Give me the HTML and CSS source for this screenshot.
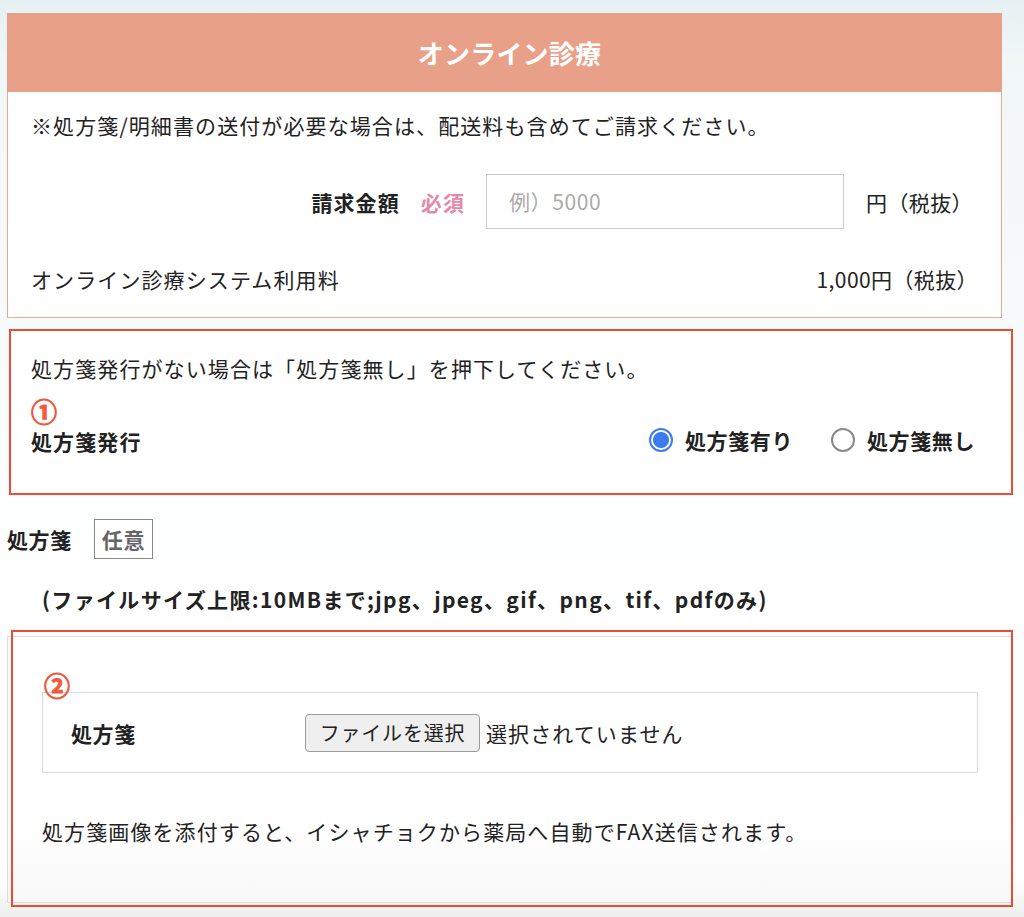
FILE: index.html
```html
<!DOCTYPE html>
<html lang="ja">
<head>
<meta charset="utf-8">
<title>オンライン診療</title>
<link rel="stylesheet" href="styles.css">
</head>
<body>
<div class="page">
  <section class="card">
    <h1 class="card-head">オンライン診療</h1>
    <div class="card-body">
      <p class="note">※処方箋/明細書の送付が必要な場合は、配送料も含めてご請求ください。</p>
      <div class="amount-row">
        <span class="label">請求金額</span>
        <span class="req">必須</span>
        <div class="amount-input">例）5000</div>
        <span class="unit">円（税抜）</span>
      </div>
      <div class="fee-row">
        <span>オンライン診療システム利用料</span>
        <span>1,000円（税抜）</span>
      </div>
    </div>
  </section>

  <section class="rx-issue">
    <p class="rx-text">処方箋発行がない場合は「処方箋無し」を押下してください。</p>
    <div class="rx-row">
      <div class="rx-left">
        <span class="num">①</span>
        <span class="label">処方箋発行</span>
      </div>
      <div class="radios">
        <label class="radio"><span class="dot checked"></span><span class="label">処方箋有り</span></label>
        <label class="radio"><span class="dot"></span><span class="label">処方箋無し</span></label>
      </div>
    </div>
  </section>

  <div class="rx-head">
    <span class="label">処方箋</span>
    <span class="opt">任意</span>
  </div>
  <p class="size-note">(ファイルサイズ上限:10MBまで;jpg、jpeg、gif、png、tif、pdfのみ)</p>

  <section class="upload">
    <span class="num">②</span>
    <div class="file-box">
      <span class="label file-label">処方箋</span>
      <button class="file-btn" type="button">ファイルを選択</button>
      <span class="file-status">選択されていません</span>
    </div>
    <p class="upload-text">処方箋画像を添付すると、イシャチョクから薬局へ自動でFAX送信されます。</p>
  </section>
</div>
</body>
</html>
```

FILE: styles.css
```css
* { box-sizing: border-box; }
html, body { margin: 0; padding: 0; }
body {
  width: 1024px;
  height: 917px;
  overflow: hidden;
  font-family: "Noto Sans CJK JP", "Noto Sans", sans-serif;
  font-size: 21px;
  letter-spacing: 1.1px;
  color: #222;
  background: linear-gradient(180deg, #e6f0f2 0px, #f1f6f7 60px, #f7fafa 300px, #ffffff 600px, #ffffff 880px, #eeeeee 917px);
}
p { margin: 0; }
.page {
  padding: 13px 0 0 7px;
}
.label { font-weight: bold; }

.card { width: 995px; }
.card-head {
  margin: 0;
  height: 79px;
  background: #e9a088;
  color: #fff;
  font-size: 26px;
  font-weight: bold;
  letter-spacing: 0.2px;
  line-height: 79px;
  text-align: center;
  padding-left: 10px;
}
.card-body {
  background: #fff;
  border: 1px solid #eea890;
  border-top: none;
  padding: 17px 23px 22px;
}
.note { line-height: 32px; }
.amount-row {
  margin-top: 33px;
  height: 55px;
  display: flex;
  align-items: center;
  justify-content: flex-end;
  padding-right: 5px;
}
.req {
  color: #e589a8;
  font-weight: bold;
  margin-left: 21px;
}
.amount-input {
  margin-left: 21px;
  width: 358px;
  height: 55px;
  border: 1px solid #ccc;
  color: #aaa;
  line-height: 53px;
  padding-left: 22px;
  letter-spacing: 0.6px;
  background: #fff;
}
.unit { margin-left: 22px; letter-spacing: 0.4px; }
.fee-row {
  margin-top: 34px;
  line-height: 32px;
  display: flex;
  justify-content: space-between;
}
.fee-row span:last-child { letter-spacing: 0.4px; }

.rx-issue {
  margin: 11px 0 0 2px;
  width: 1004px;
  height: 166px;
  border: 2px solid #ee4b35;
  background: #fff;
  padding: 21px 36px 0 20px;
}
.rx-text { line-height: 32px; }
.rx-row {
  margin-top: 14px;
  display: flex;
  justify-content: space-between;
  align-items: flex-end;
}
.rx-left { display: flex; flex-direction: column; }
.num {
  color: #f05a3c;
  font-weight: bold;
  font-size: 26px;
  line-height: 26px;
  letter-spacing: 0;
  -webkit-text-stroke: 1px #f05a3c;
}
.rx-left .label { line-height: 32px; margin-top: 1px; }
.radios { display: flex; align-items: center; gap: 38px; padding-bottom: 1px; }
.radio { display: flex; align-items: center; gap: 12px; line-height: 32px; letter-spacing: 0.6px; }
.dot {
  width: 24px;
  height: 24px;
  border-radius: 50%;
  border: 2px solid #8a8a8a;
  background: #fff;
  display: inline-block;
}
.dot.checked {
  border: 2px solid #3b7cf0;
  background: radial-gradient(circle, #3b7cf0 0, #3b7cf0 7.5px, #fff 8.5px);
}

.rx-head {
  margin-top: 24px;
  display: flex;
  align-items: center;
  height: 40px;
}
.rx-head .label { letter-spacing: 0.6px; }
.opt {
  margin-left: 22px;
  height: 40px;
  line-height: 38px;
  padding: 0 7px;
  border: 1px solid #888;
  color: #666;
  font-weight: bold;
  letter-spacing: 0.6px;
  background: #fff;
}
.size-note {
  margin: 24px 0 0 35px;
  font-weight: bold;
  line-height: 32px;
  letter-spacing: 1.35px;
}

.upload {
  position: relative;
  margin-top: 21px;
  width: 1006px;
  height: 267px;
  border: 1px solid #dddddd;
  background: linear-gradient(180deg, #ffffff 70%, #f8f8f8 100%);
  padding: 35px 0 0 34px;
}
.upload::after {
  content: "";
  position: absolute;
  top: -7px;
  left: 3px;
  right: -1px;
  bottom: -5px;
  border: 2px solid #ee4b35;
  pointer-events: none;
}
.upload .num { display: block; margin-left: 2px; }
.file-box {
  margin-top: -6px;
  width: 936px;
  height: 81px;
  border: 1px solid #dddddd;
  background: #fff;
  display: flex;
  align-items: center;
  padding-left: 28px;
}
.file-label { width: 234px; letter-spacing: 0.6px; }
.file-btn {
  font-family: inherit;
  font-size: 20px;
  letter-spacing: 0.8px;
  color: #222;
  width: 175px;
  height: 38px;
  padding: 0;
  background: #efefef;
  border: 1px solid #9a9a9a;
  border-radius: 4px;
}
.file-status { margin-left: 6px; }
.upload-text {
  margin-top: 42px;
  line-height: 32px;
}
```
